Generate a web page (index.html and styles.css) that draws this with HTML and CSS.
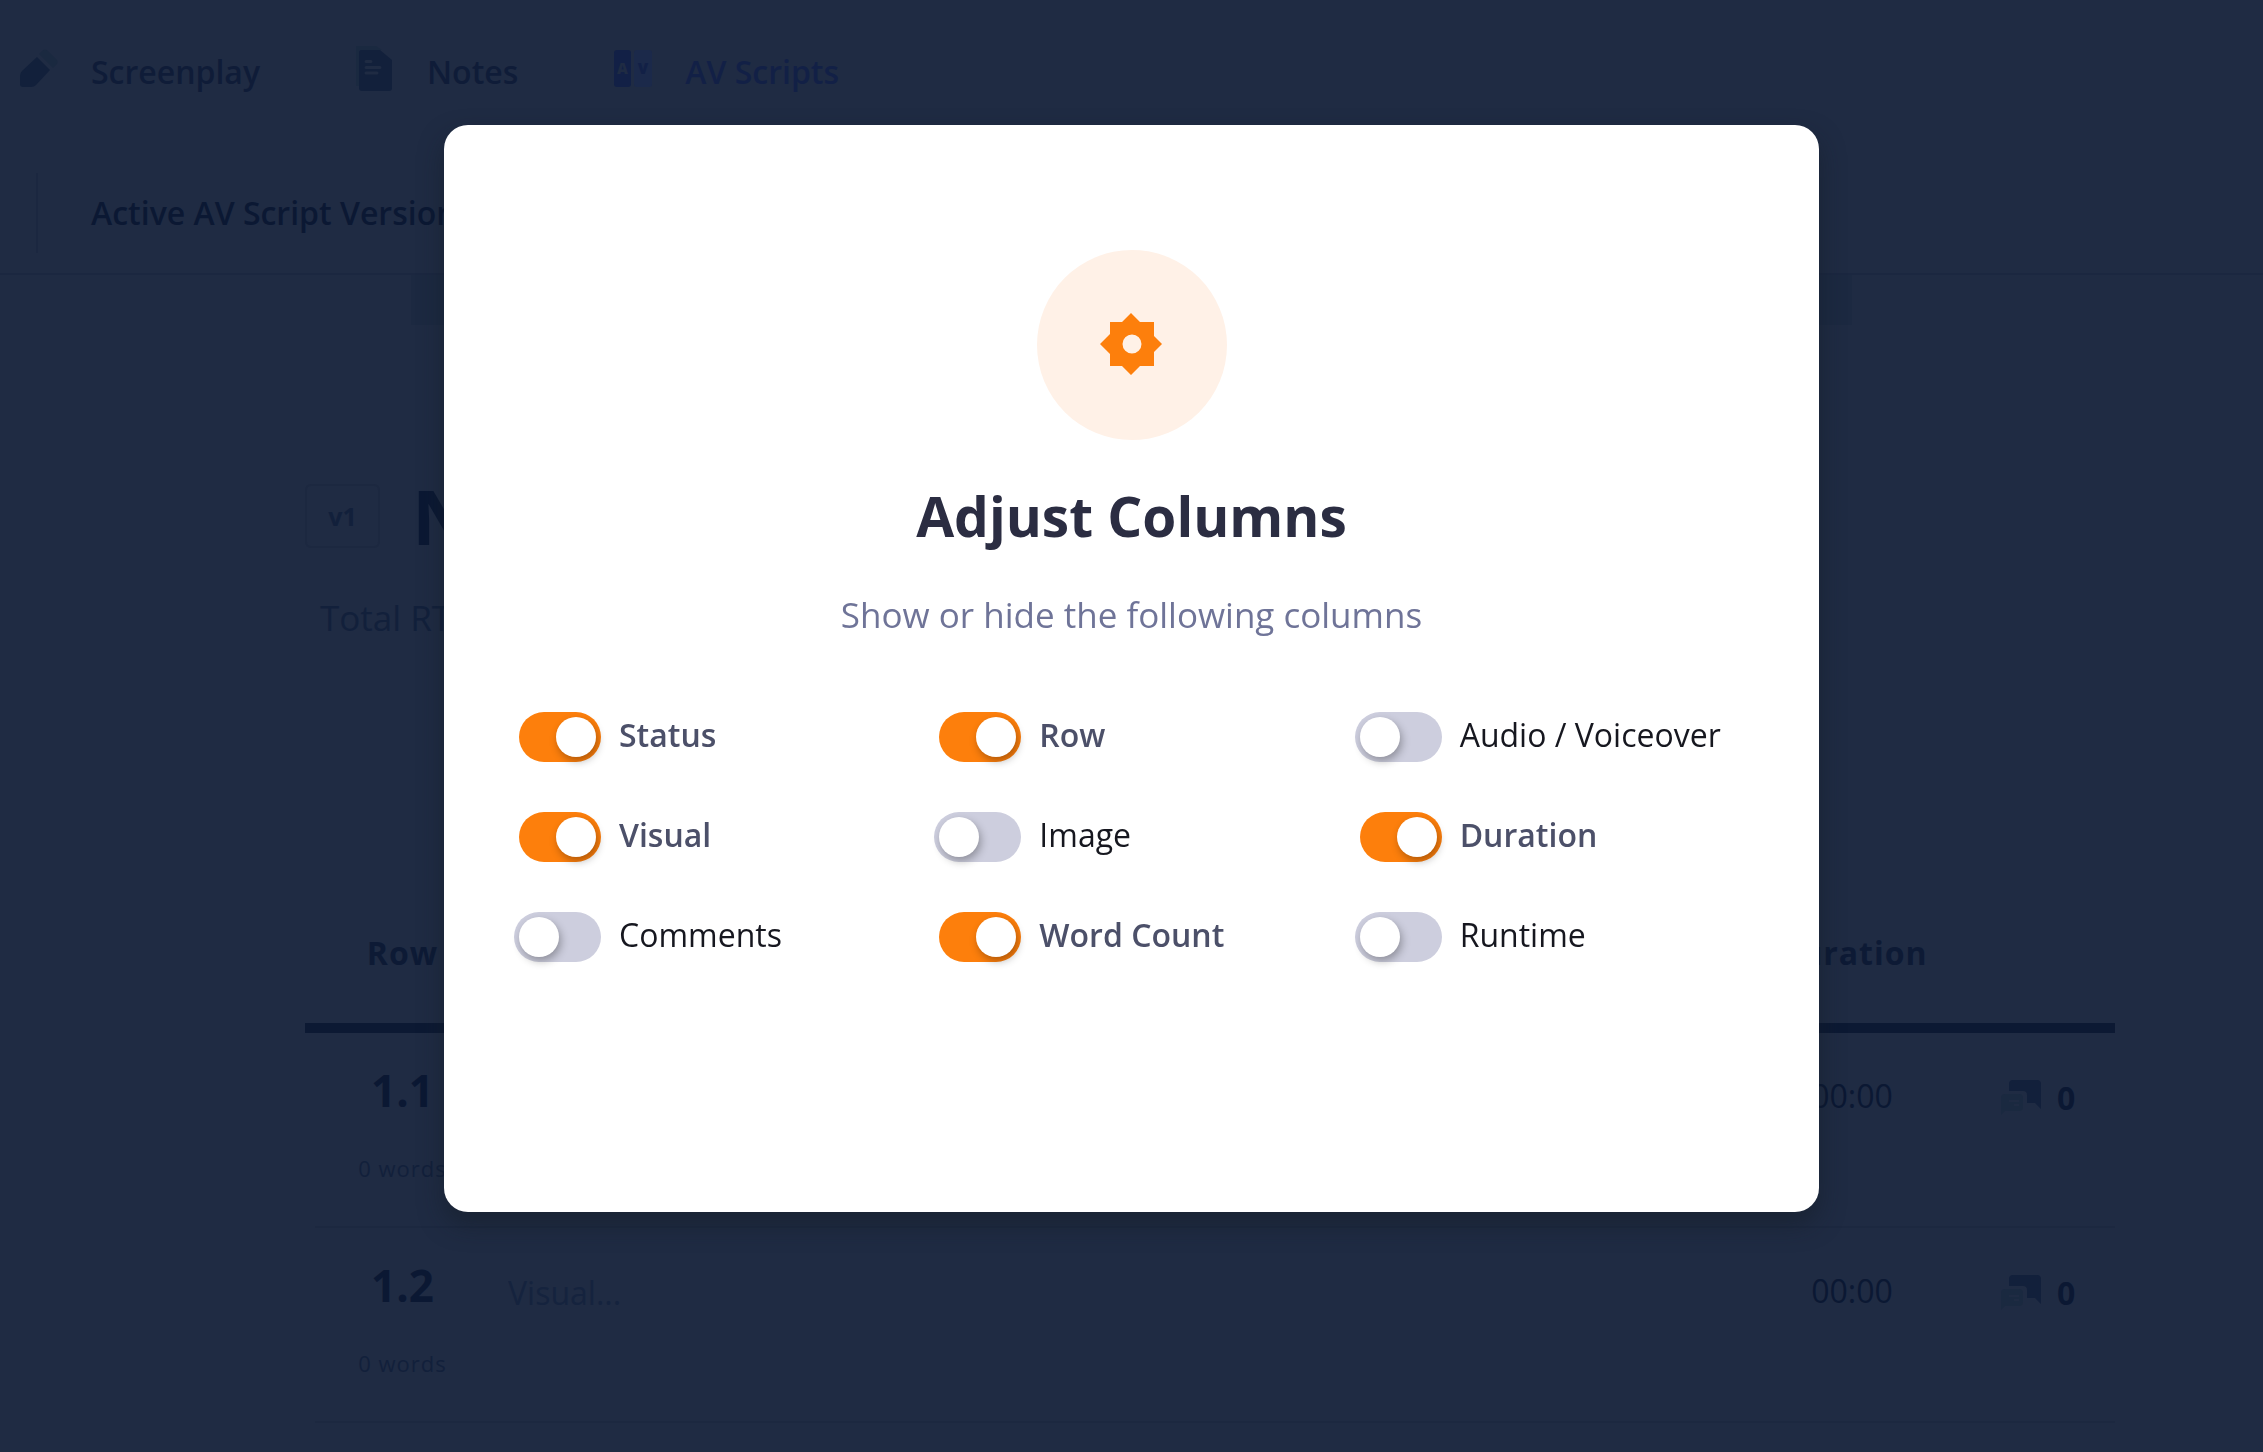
FILE: index.html
```html
<!DOCTYPE html>
<html lang="en">
<head>
<meta charset="utf-8">
<title>Adjust Columns</title>
<link rel="stylesheet" href="styles.css">
</head>
<body>
<header class="header">
  <nav class="nav">
    <a class="nav-item" href="#screenplay">
      <svg class="nav-icon" viewBox="20 47 38 48"><path class="ink" d="M37 58 50 71 36 86Q34 88 31 88H23Q20 88 20 85V77Q20 74 22 72Z"/><path class="ink-soft" d="M39 55 42 52Q45 49 48 52L56 60Q59 63 56 66L53 69Z"/></svg>
      <span class="nav-label">Screenplay</span>
    </a>
    <a class="nav-item" href="#notes">
      <svg class="nav-icon" viewBox="358 47 38 48"><path class="ink-soft" d="M358 87V47H378L384 51H361V87Z"/><path class="ink" d="M363 51H382L394 61V89Q394 92 391 92H364Q361 92 361 89V53Q361 51 363 51Z"/><path class="lines" d="M368 62.500h5M368 68.500h14M368 74h11"/></svg>
      <span class="nav-label">Notes</span>
    </a>
    <a class="nav-item nav-item-active" href="#av">
      <svg class="nav-icon" viewBox="614 47 38 48"><rect class="blue" x="614" y="51" width="17" height="37" rx="3"/><rect class="blue-soft" x="634" y="51" width="18" height="37" rx="3"/><text class="mark mark-a" x="622.500" y="75">A</text><text class="mark mark-v" x="643" y="75">V</text></svg>
      <span class="nav-label">AV Scripts</span>
    </a>
  </nav>
  <div class="toolbar"><span class="toolbar-label">Active AV Script Version</span></div>
</header>
<div class="band"></div>
<main class="main">
  <div class="title-row"><span class="version">v1</span><h1 class="script-title">New</h1></div>
  <p class="total">Total RT</p>
  <table class="script">
    <colgroup><col class="col-row"><col><col class="col-duration"><col class="col-comments"></colgroup>
    <thead><tr><th>Row</th><th></th><th>Duration</th><th></th></tr></thead>
    <tbody>
      <tr>
        <td class="cell-row"><div class="number">1.1</div><div class="words">0 words</div></td>
        <td class="cell-visual"><input class="visual" type="text" placeholder="Visual..." aria-label="Visual 1.1"></td>
        <td class="cell-duration">00:00</td>
        <td class="cell-comments"><div class="comments"><svg class="chat" viewBox="0 0 40 36"><path class="ink" d="M8 11V4Q8 0 12 0H36Q40 0 40 4V29L34 23H26V15Q26 11 22 11Z"/><path class="ink-soft" d="M4 14H18Q22 14 22 18V27Q22 31 18 31H4L0 35V18Q0 14 4 14Z"/><path class="chat-lines" d="M8 21h10M13 25h5"/></svg>0</div></td>
      </tr>
      <tr>
        <td class="cell-row"><div class="number">1.2</div><div class="words">0 words</div></td>
        <td class="cell-visual"><input class="visual" type="text" placeholder="Visual..." aria-label="Visual 1.2"></td>
        <td class="cell-duration">00:00</td>
        <td class="cell-comments"><div class="comments"><svg class="chat" viewBox="0 0 40 36"><path class="ink" d="M8 11V4Q8 0 12 0H36Q40 0 40 4V29L34 23H26V15Q26 11 22 11Z"/><path class="ink-soft" d="M4 14H18Q22 14 22 18V27Q22 31 18 31H4L0 35V18Q0 14 4 14Z"/><path class="chat-lines" d="M8 21h10M13 25h5"/></svg>0</div></td>
      </tr>
    </tbody>
  </table>
</main>
<div class="overlay">
  <section class="modal" role="dialog" aria-labelledby="modal-title">
    <div class="badge"><svg class="gear" viewBox="1 1 62 62"><path fill="#fd7f0c" fill-rule="evenodd" d="M31 0 40 9H54V23L62 31 54 39V53H40L31 62 22 53H10V41L0 31 10 21V9H22ZM32 21.500A9.500 9.500 0 1 0 32 40.500A9.500 9.500 0 1 0 32 21.500Z"/></svg></div>
    <h2 class="modal-title" id="modal-title">Adjust Columns</h2>
    <p class="modal-text">Show or hide the following columns</p>
    <div class="options">
      <label class="option"><input class="switch" type="checkbox" checked><span class="option-label">Status</span></label>
      <label class="option"><input class="switch" type="checkbox" checked><span class="option-label">Row</span></label>
      <label class="option"><input class="switch" type="checkbox"><span class="option-label">Audio / Voiceover</span></label>
      <label class="option"><input class="switch" type="checkbox" checked><span class="option-label">Visual</span></label>
      <label class="option"><input class="switch" type="checkbox"><span class="option-label">Image</span></label>
      <label class="option"><input class="switch" type="checkbox" checked><span class="option-label">Duration</span></label>
      <label class="option"><input class="switch" type="checkbox"><span class="option-label">Comments</span></label>
      <label class="option"><input class="switch" type="checkbox" checked><span class="option-label">Word Count</span></label>
      <label class="option"><input class="switch" type="checkbox"><span class="option-label">Runtime</span></label>
    </div>
  </section>
</div>
</body>
</html>
```
FILE: styles.css
```css
* { box-sizing: border-box; }
body {
  margin: 0;
  min-height: 100vh;
  overflow: hidden;
  background: #1f2b43;
  color: #0b1833;
  font-family: "Open Sans", sans-serif;
  font-size: 32px;
  line-height: 44px;
}
h1, h2, p { margin: 0; }

/* Header */
.header { border-bottom: 2px solid #1b2740; padding-bottom: 20px; }
.nav { display: flex; gap: 96px; padding: 46px 20px 0; }
.nav-item { display: flex; align-items: center; gap: 33px; color: #0f1c38; font-weight: 600; text-decoration: none; }
.nav-item-active { color: #122046; }
.nav-icon { width: 38px; height: 48px; overflow: visible; }
.nav-label { padding-top: 4px; }
.ink { fill: #12203b; }
.ink-soft { fill: #1a2940; }
.lines { fill: none; stroke: #1f2b43; stroke-width: 3; stroke-linecap: round; }
.blue { fill: #122046; }
.blue-soft { fill: #1b294a; }
.mark { font-size: 15px; font-weight: 800; text-anchor: middle; }
.mark-a { fill: #1f2b43; }
.mark-v { fill: #122046; }
.toolbar { display: flex; align-items: center; height: 80px; margin: 79px 0 0 36px; padding-left: 53px; border-left: 2px solid #1b2740; }
.toolbar-label { font-weight: 600; }
.band { height: 50px; margin: 0 411px; background: #1c2941; }

/* Script */
.main { padding: 139px 148px 0 305px; }
.title-row { display: flex; align-items: center; gap: 32px; }
.version { width: 75px; padding: 8px 0; border: 2px solid #1c2840; border-radius: 6px; color: #12203b; font-size: 25px; font-weight: 700; text-align: center; }
.script-title { font-size: 76px; line-height: 104px; font-weight: 700; }
.total { margin-top: 26px; padding-left: 15px; color: #12203b; font-size: 35px; line-height: 48px; }
.script { width: 100%; margin-top: 241px; border-collapse: separate; border-spacing: 0; table-layout: fixed; }
.col-row { width: 195px; }
.col-duration { width: 190px; }
.col-comments { width: 168px; }
th { padding: 48px 0; border-bottom: 10px solid #0c1933; color: #0d1a35; font-weight: 700; letter-spacing: 1px; }
td { height: 195px; padding: 0; border-bottom: 2px solid #1c2840; vertical-align: top; }
.cell-row { padding-top: 27px; border-bottom: 0; background: linear-gradient(#1c2840, #1c2840) 10px 100% / 100% 2px no-repeat; text-align: center; }
.number { font-size: 44px; line-height: 60px; font-weight: 700; }
.words { margin-top: 33px; color: #12203b; font-size: 22px; line-height: 30px; font-weight: 500; letter-spacing: 1px; }
.cell-visual { padding: 43px 8px 0; }
.visual { display: block; width: 100%; height: 44px; padding: 0; border: 0; background: none; font: inherit; }
.visual::placeholder { color: #15233e; opacity: 1; }
.cell-duration { padding-top: 41px; text-align: center; }
.cell-comments { padding: 43px 0 0 54px; }
.comments { display: flex; align-items: center; gap: 16px; font-weight: 700; }
.chat { width: 40px; height: 36px; }
.chat-lines { stroke: #1f2b43; stroke-width: 2; }

/* Dialog */
.overlay { position: fixed; inset: 0; display: flex; justify-content: center; align-items: flex-start; padding: 125px 24px; }
.modal { width: 100%; max-width: 1375px; padding: 125px 57px 250px; border-radius: 24px; background: #fff; box-shadow: 0 12px 24px rgba(20, 28, 36, .5); text-align: center; }
.badge { display: flex; align-items: center; justify-content: center; width: 190px; height: 190px; margin: 0 auto; border-radius: 50%; background: #fff1e7; }
.gear { width: 62px; height: 62px; overflow: visible; }
.modal-title { margin-top: 38px; color: #2b2d42; font-size: 55px; line-height: 76px; font-weight: 700; }
.modal-text { margin-top: 36px; color: #6f7498; font-size: 35px; line-height: 50px; }
.options { display: grid; grid-template-columns: repeat(3, 1fr); gap: 50px 0; margin-top: 72px; text-align: left; }
.option { display: flex; align-items: center; gap: 18px; height: 50px; padding-left: 13px; }
.option-label { padding-bottom: 4px; color: #16171f; }
.switch { appearance: none; flex: none; width: 87px; height: 50px; margin: 0; padding: 5px; border-radius: 25px; background: #cdcede; }
.switch::before { content: ""; display: block; width: 40px; height: 40px; border-radius: 50%; background: #fff; box-shadow: 2px 4px 8px rgba(0, 0, 0, .3); }
.switch:checked { width: 82px; margin-left: 5px; background: #fd7f0c; }
.switch:checked::before { margin-left: auto; }
.switch:checked + .option-label { color: #4c5069; font-weight: 600; }
```
